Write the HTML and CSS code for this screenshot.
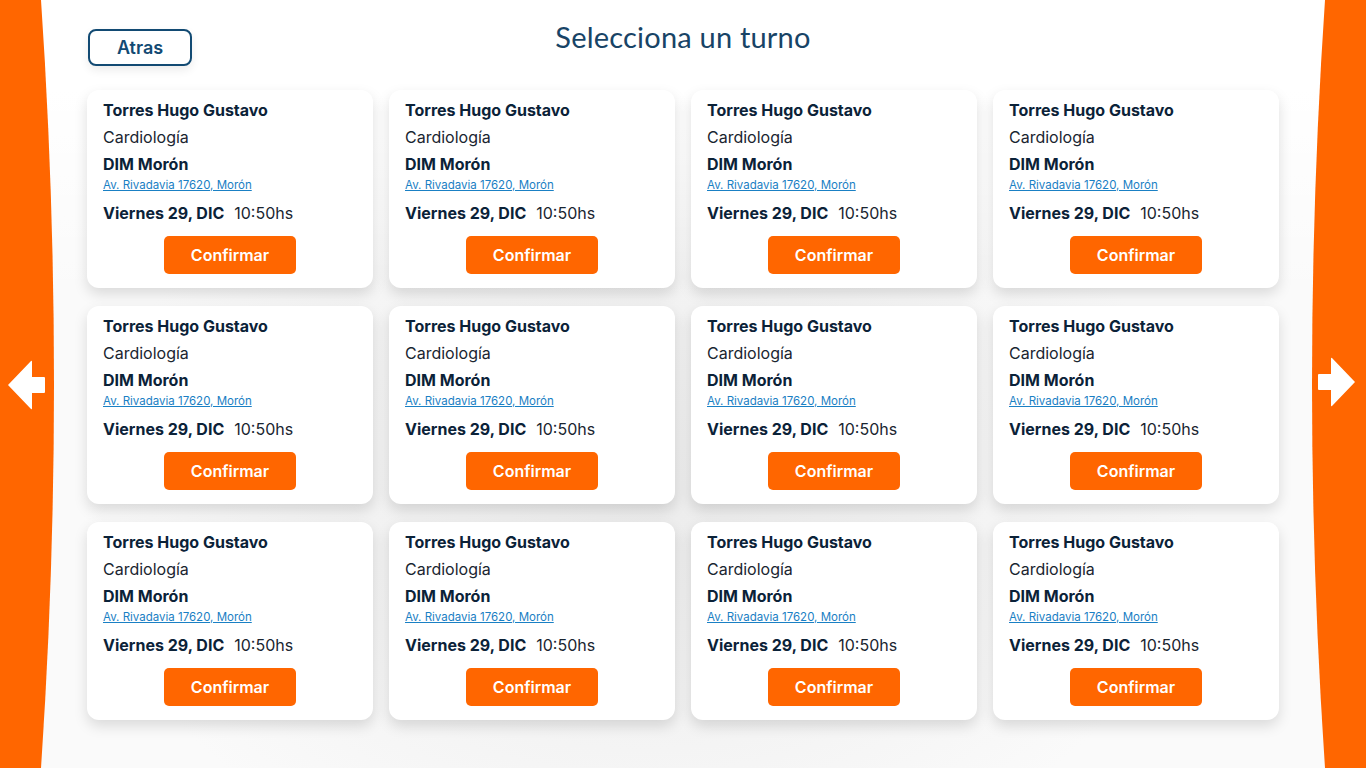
FILE: index.html
```html
<!DOCTYPE html>
<html lang="es">
<head>
<meta charset="utf-8">
<title>Selecciona un turno</title>
<link rel="stylesheet" href="styles.css">
</head>
<body>
<div class="page">
  <aside class="side side-left">
    <svg class="band" viewBox="0 0 54 768" preserveAspectRatio="none"><path d="M0 0 H41 Q67 384 41 768 H0 Z" fill="#ff6600"/></svg>
    <svg class="arrow" width="40" height="54" viewBox="0 0 40 54"><path d="M1 26 L24 2 Q25 1 25 3 V18 H37 Q38 18 38 19 V33 Q38 34 37 34 H25 V49 Q25 51 24 50 Z" fill="#fff"/></svg>
  </aside>
  <main class="main">
    <header class="header">
      <button class="back">Atras</button>
      <h1 class="title">Selecciona un turno</h1>
      <div></div>
    </header>
    <section class="grid">
      <article class="card"><div class="name">Torres Hugo Gustavo</div><div class="spec">Cardiología</div><div class="place">DIM Morón</div><a class="addr" href="#">Av. Rivadavia 17620, Morón</a><div class="when"><b>Viernes 29, DIC</b><span>10:50hs</span></div><button class="confirm">Confirmar</button></article>
      <article class="card"><div class="name">Torres Hugo Gustavo</div><div class="spec">Cardiología</div><div class="place">DIM Morón</div><a class="addr" href="#">Av. Rivadavia 17620, Morón</a><div class="when"><b>Viernes 29, DIC</b><span>10:50hs</span></div><button class="confirm">Confirmar</button></article>
      <article class="card"><div class="name">Torres Hugo Gustavo</div><div class="spec">Cardiología</div><div class="place">DIM Morón</div><a class="addr" href="#">Av. Rivadavia 17620, Morón</a><div class="when"><b>Viernes 29, DIC</b><span>10:50hs</span></div><button class="confirm">Confirmar</button></article>
      <article class="card"><div class="name">Torres Hugo Gustavo</div><div class="spec">Cardiología</div><div class="place">DIM Morón</div><a class="addr" href="#">Av. Rivadavia 17620, Morón</a><div class="when"><b>Viernes 29, DIC</b><span>10:50hs</span></div><button class="confirm">Confirmar</button></article>
      <article class="card"><div class="name">Torres Hugo Gustavo</div><div class="spec">Cardiología</div><div class="place">DIM Morón</div><a class="addr" href="#">Av. Rivadavia 17620, Morón</a><div class="when"><b>Viernes 29, DIC</b><span>10:50hs</span></div><button class="confirm">Confirmar</button></article>
      <article class="card"><div class="name">Torres Hugo Gustavo</div><div class="spec">Cardiología</div><div class="place">DIM Morón</div><a class="addr" href="#">Av. Rivadavia 17620, Morón</a><div class="when"><b>Viernes 29, DIC</b><span>10:50hs</span></div><button class="confirm">Confirmar</button></article>
      <article class="card"><div class="name">Torres Hugo Gustavo</div><div class="spec">Cardiología</div><div class="place">DIM Morón</div><a class="addr" href="#">Av. Rivadavia 17620, Morón</a><div class="when"><b>Viernes 29, DIC</b><span>10:50hs</span></div><button class="confirm">Confirmar</button></article>
      <article class="card"><div class="name">Torres Hugo Gustavo</div><div class="spec">Cardiología</div><div class="place">DIM Morón</div><a class="addr" href="#">Av. Rivadavia 17620, Morón</a><div class="when"><b>Viernes 29, DIC</b><span>10:50hs</span></div><button class="confirm">Confirmar</button></article>
      <article class="card"><div class="name">Torres Hugo Gustavo</div><div class="spec">Cardiología</div><div class="place">DIM Morón</div><a class="addr" href="#">Av. Rivadavia 17620, Morón</a><div class="when"><b>Viernes 29, DIC</b><span>10:50hs</span></div><button class="confirm">Confirmar</button></article>
      <article class="card"><div class="name">Torres Hugo Gustavo</div><div class="spec">Cardiología</div><div class="place">DIM Morón</div><a class="addr" href="#">Av. Rivadavia 17620, Morón</a><div class="when"><b>Viernes 29, DIC</b><span>10:50hs</span></div><button class="confirm">Confirmar</button></article>
      <article class="card"><div class="name">Torres Hugo Gustavo</div><div class="spec">Cardiología</div><div class="place">DIM Morón</div><a class="addr" href="#">Av. Rivadavia 17620, Morón</a><div class="when"><b>Viernes 29, DIC</b><span>10:50hs</span></div><button class="confirm">Confirmar</button></article>
      <article class="card"><div class="name">Torres Hugo Gustavo</div><div class="spec">Cardiología</div><div class="place">DIM Morón</div><a class="addr" href="#">Av. Rivadavia 17620, Morón</a><div class="when"><b>Viernes 29, DIC</b><span>10:50hs</span></div><button class="confirm">Confirmar</button></article>
    </section>
  </main>
  <aside class="side side-right">
    <svg class="band" viewBox="0 0 54 768" preserveAspectRatio="none"><path d="M13 0 Q-13 384 13 768 H54 V0 Z" fill="#ff6600"/></svg>
    <svg class="arrow" width="40" height="54" viewBox="0 0 40 54"><path d="M39 26 L16 2 Q15 1 15 3 V18 H3 Q2 18 2 19 V33 Q2 34 3 34 H15 V49 Q15 51 16 50 Z" fill="#fff"/></svg>
  </aside>
</div>
</body>
</html>
```

FILE: styles.css
```css
* { box-sizing: border-box; }
html, body { margin: 0; padding: 0; }
body {
  width: 1366px;
  height: 768px;
  overflow: hidden;
  font-family: "Inter", "Noto Sans", sans-serif;
  color: #0b2238;
  background: radial-gradient(ellipse 700px 500px at 640px 500px, #ececec 0%, #f3f3f3 45%, #fafafa 80%), #fafafa;
}
.page {
  display: grid;
  grid-template-columns: 54px 1fr 54px;
  height: 768px;
  background: linear-gradient(to bottom, #ffffff 0px, #ffffff 90px, rgba(255,255,255,0) 300px);
}
.side {
  position: relative;
  display: flex;
  align-items: center;
}
.band {
  position: absolute;
  top: 0;
  left: 0;
  width: 54px;
  height: 768px;
}
.arrow { position: relative; }
.side-left .arrow { margin-left: 7px; margin-top: 4px; }
.side-right .arrow { margin-left: 4px; margin-top: -2px; }
.main {
  display: flex;
  flex-direction: column;
  align-items: center;
}
.header {
  width: 1192px;
  display: grid;
  grid-template-columns: 1fr auto 1fr;
  align-items: start;
  padding-top: 18px;
  height: 90px;
}
.back {
  justify-self: start;
  margin-top: 11px;
  margin-left: 1px;
  width: 104px;
  height: 37px;
  border: 2px solid #124a73;
  border-radius: 8px;
  background: #fff;
  color: #124a73;
  font-family: "Inter", sans-serif;
  font-weight: 600;
  font-size: 18px;
  box-shadow: 0 4px 10px rgba(0,0,0,0.08);
  padding: 0;
}
.title {
  margin: 0;
  font-family: "Lato", sans-serif;
  font-weight: 400;
  font-size: 29px;
  line-height: 38px;
  color: #184466;
  letter-spacing: 0.2px;
}
.grid {
  width: 1192px;
  display: grid;
  grid-template-columns: repeat(4, 286px);
  column-gap: 16px;
  row-gap: 18px;
}
.card {
  height: 198px;
  background: #fff;
  border-radius: 12px;
  box-shadow: 0 6px 14px rgba(0,0,0,0.13);
  padding: 7px 16px 13px;
  display: flex;
  flex-direction: column;
  align-items: flex-start;
}
.name, .place {
  font-weight: 700;
  font-size: 16px;
  line-height: 26px;
  color: #0b2238;
}
.spec {
  font-size: 16px;
  line-height: 28px;
  color: #1a2530;
}
.addr {
  font-size: 11.5px;
  line-height: 16px;
  color: #1a80c4;
  text-decoration: underline;
}
.when {
  margin-top: 6px;
  line-height: 28px;
  font-size: 16px;
}
.when b { font-weight: 700; color: #0b2238; }
.when span { margin-left: 10px; color: #1a2530; }
.confirm {
  align-self: center;
  margin-top: 9px;
  width: 132px;
  height: 38px;
  border: none;
  border-radius: 5px;
  background: #ff6600;
  color: #fff;
  font-family: "Inter", sans-serif;
  font-weight: 600;
  font-size: 16px;
  padding: 0;
}
```
